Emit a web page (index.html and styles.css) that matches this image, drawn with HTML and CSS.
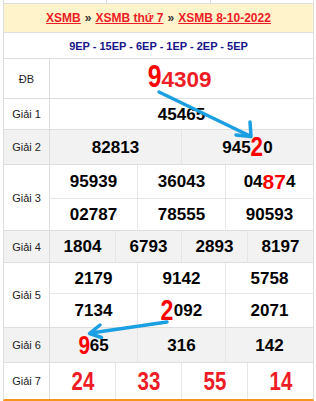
FILE: index.html
```html
<!DOCTYPE html>
<html lang="vi">
<head>
<meta charset="utf-8">
<title>XSMB 8-10-2022</title>
<link rel="stylesheet" href="styles.css">
</head>
<body>
<div class="page">
  <div class="prev"><span></span><span></span><span></span></div>
  <div class="board">
    <div class="title"><a href="#">XSMB</a><span class="sep">»</span><a href="#">XSMB thứ 7</a><span class="sep">»</span><a href="#">XSMB 8-10-2022</a></div>
    <div class="codes">9EP - 15EP - 6EP - 1EP - 2EP - 5EP</div>

    <div class="row">
      <div class="lbl">ĐB</div>
      <div class="cells one"><div class="num db"><span class="nar db9">9</span>4309</div></div>
    </div>

    <div class="row">
      <div class="lbl">Giải 1</div>
      <div class="cells one"><div class="num">45465</div></div>
    </div>

    <div class="row alt">
      <div class="lbl">Giải 2</div>
      <div class="cells two"><div class="num">82813</div><div class="num">945<span class="nar hl hl2">2</span>0</div></div>
    </div>

    <div class="row">
      <div class="lbl">Giải 3</div>
      <div class="cells three g3">
        <div class="num">95939</div><div class="num">36043</div><div class="num">04<span class="hl hl87">87</span>4</div>
        <div class="num">02787</div><div class="num">78555</div><div class="num">90593</div>
      </div>
    </div>

    <div class="row alt">
      <div class="lbl">Giải 4</div>
      <div class="cells four"><div class="num">1804</div><div class="num">6793</div><div class="num">2893</div><div class="num">8197</div></div>
    </div>

    <div class="row">
      <div class="lbl">Giải 5</div>
      <div class="cells three g5">
        <div class="num">2179</div><div class="num">9142</div><div class="num">5758</div>
        <div class="num">7134</div><div class="num"><span class="nar hl hl5">2</span>092</div><div class="num">2071</div>
      </div>
    </div>

    <div class="row alt">
      <div class="lbl">Giải 6</div>
      <div class="cells three"><div class="num"><span class="nar hl hl6">9</span>65</div><div class="num">316</div><div class="num">142</div></div>
    </div>

    <div class="row">
      <div class="lbl">Giải 7</div>
      <div class="cells four"><div class="num g7"><span class="nar">24</span></div><div class="num g7"><span class="nar">33</span></div><div class="num g7"><span class="nar">55</span></div><div class="num g7"><span class="nar">14</span></div></div>
    </div>
  </div>

  <svg class="arrows" width="316" height="401" viewBox="0 0 316 401" aria-hidden="true">
    <g fill="none" stroke="#1a9fe3" stroke-width="3.5" stroke-linecap="round" stroke-linejoin="round">
      <line x1="159" y1="92" x2="250" y2="136"/>
      <polyline points="236,135 251,136.5 250,122"/>
      <line x1="167" y1="322" x2="91" y2="333"/>
      <polyline points="100,325 89.5,333.5 101.5,337.5"/>
    </g>
  </svg>
</div>
</body>
</html>
```

FILE: styles.css
```css
* { box-sizing: border-box; margin: 0; padding: 0; }

body {
  margin: 0;
  background: #fff;
  font-family: "Liberation Sans", Arial, sans-serif;
  color: #000;
}

.page {
  position: relative;
  width: 316px;
  height: 401px;
  padding-left: 3px;
  overflow: hidden;
}

.prev {
  display: grid;
  grid-template-columns: repeat(3, 1fr);
  gap: 1px;
  width: 311px;
  height: 3px;
  background: #ddd;
  border-left: 1px solid #ddd;
  border-right: 1px solid #ddd;
}
.prev span { background: #fff; }

.board {
  width: 311px;
  display: grid;
  grid-template-rows: 28px 25px 39px 30px 34px 65px 31px 64px 34px 36px;
  gap: 1px;
  background: #dedede;
  border: 1px solid #dedede;
  border-bottom: 2px solid #f7941d;
}

.title {
  background: #fff3cc;
  display: flex;
  align-items: center;
  justify-content: center;
  font-size: 12px;
  font-weight: bold;
}
.title a { color: #ee1c25; text-decoration: underline; }
.title .sep { color: #333; margin: 0 4px; }

.codes {
  background: #fff;
  display: flex;
  align-items: center;
  justify-content: center;
  font-size: 11px;
  font-weight: bold;
  color: #16168a;
}

.row {
  display: grid;
  grid-template-columns: 45px 1fr;
  gap: 1px;
  background: #dedede;
}

.lbl {
  background: #fff;
  display: flex;
  align-items: center;
  justify-content: center;
  font-size: 11px;
  color: #222;
}

.cells {
  display: grid;
  gap: 1px;
  background: #e6e6e6;
}
.cells.one { grid-template-columns: 1fr; }
.cells.two { grid-template-columns: repeat(2, 1fr); }
.cells.three { grid-template-columns: repeat(3, 1fr); }
.cells.four { grid-template-columns: repeat(4, 1fr); }
.cells.g3 { grid-template-rows: 33px 31px; }
.cells.g5 { grid-template-rows: 30px 33px; }

.num {
  background: #fff;
  display: flex;
  align-items: center;
  justify-content: center;
  font-size: 17px;
  font-weight: bold;
  line-height: 1;
  white-space: nowrap;
}

.row.alt .lbl,
.row.alt .num { background: #f2f2f2; }

/* condensed digits */
.nar {
  display: inline-block;
  transform: scaleX(0.8);
  margin: 0 -0.055em;
}

.num.db {
  font-size: 22.5px;
  color: #ee1c25;
  align-items: flex-end;
  padding-bottom: 7px;
  padding-right: 4px;
}
.db9 {
  font-size: 31px;
  color: #f00;
  margin-bottom: -1px;
}

.hl { color: #f00; }
.hl2 { font-size: 28px; }
.hl87 { font-size: 21px; }
.hl5 { font-size: 29px; }
.hl6 { font-size: 26px; }

.num.g7 {
  font-size: 25px;
  color: #ee1c25;
}
.num.g7 .nar { margin: 0; transform: scaleX(0.82); }

.arrows {
  position: absolute;
  left: 0;
  top: 0;
  pointer-events: none;
}
```
